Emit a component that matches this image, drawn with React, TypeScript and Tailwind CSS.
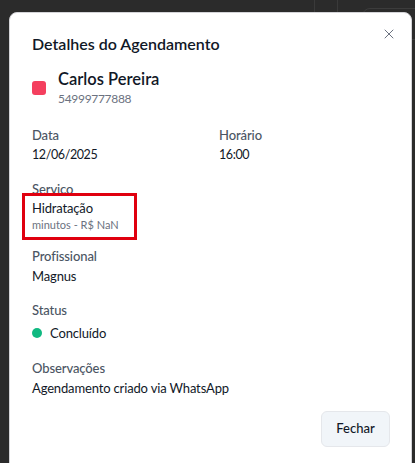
import { X } from "lucide-react";

const Field = (props: { label: string; children: React.ReactNode }) => {
    return (
        <div className="flex flex-col">
            <span className="text-[13px] leading-5 font-medium tracking-[-0.1px] text-[#4b5563]">{props.label}</span>
            {props.children}
        </div>
    )
}

const value = "text-[13px] leading-5 tracking-[-0.15px] text-[#111827]"

const App = () => {
    return (
        <div
            className="relative h-[463px] w-[415px] overflow-hidden bg-[#2b2b2b]"
            style={{ fontFamily: 'Lato, "Noto Sans", sans-serif' }}
        >
            {/* faint background app chrome */}
            <div className="absolute left-[314px] top-0 h-3 w-px bg-[#3a3a3a]" />
            <div className="absolute left-[337px] top-0 h-3 w-px bg-[#3a3a3a]" />
            <div className="absolute left-[362px] top-[8px] h-8 w-20 rounded-tl-lg border border-[#3c3c3c]" />

            <div className="absolute left-[9px] top-[12px] w-[403px] h-[480px] rounded-lg border border-[#d4d4d8] bg-white pl-[22px] pr-[21px] pt-[17px]">
                <button className="absolute right-[14px] top-[13px] text-[#6b7280]">
                    <X size={16} strokeWidth={1.5} />
                </button>

                <h2 className="text-[16px] leading-7 font-semibold text-[#111827]">Detalhes do Agendamento</h2>

                <div className="mt-[9px] flex flex-row items-center gap-3">
                    <div className="h-[14px] w-[14px] rounded-[3px] bg-[#f43f5e]" />
                    <div className="flex flex-col">
                        <span className="text-[16.5px] leading-6 font-semibold text-[#111827]">Carlos Pereira</span>
                        <span className="text-[12px] leading-5 tracking-[-0.3px] text-[#6b7280] -mt-[2px]">54999777888</span>
                    </div>
                </div>

                <div className="mt-[16px] flex flex-col gap-[14px]">
                    <div className="grid grid-cols-2 gap-4">
                        <Field label="Data">
                            <span className="text-[12.5px] leading-5 tracking-[-0.4px] text-[#111827]">12/06/2025</span>
                        </Field>
                        <Field label="Horário">
                            <span className="text-[12.5px] leading-5 tracking-[-0.4px] text-[#111827]">16:00</span>
                        </Field>
                    </div>

                    <div className="relative">
                        <Field label="Serviço">
                            <span className={value + " -mt-[1px]"}>Hidratação</span>
                            <span className="text-[11px] leading-4 text-[#6b7280] -mt-[1px]">minutos - R$ NaN</span>
                        </Field>
                        <div className="absolute left-[-10px] top-[14px] h-[47px] w-[115px] border-[3px] border-[#e0000f]" />
                    </div>

                    <div className="-mt-[1px]">
                        <Field label="Profissional">
                            <span className={value}>Magnus</span>
                        </Field>
                    </div>

                    <Field label="Status">
                        <div className="mt-[3px] flex h-5 flex-row items-center gap-2">
                            <div className="h-[10px] w-[10px] rounded-full bg-[#10b981]" />
                            <span className={value}>Concluído</span>
                        </div>
                    </Field>

                    <div className="mt-[1px]">
                        <Field label="Observações">
                            <span className={value}>Agendamento criado via WhatsApp</span>
                        </Field>
                    </div>
                </div>

                <div className="mt-[13px] flex flex-row justify-end">
                    <button className="h-[36px] w-[69px] rounded-md border border-[#e5e7eb] bg-[#f1f5f9] text-[13px] font-medium text-[#111827]">
                        Fechar
                    </button>
                </div>
            </div>
        </div>
    )
}

export default App;
